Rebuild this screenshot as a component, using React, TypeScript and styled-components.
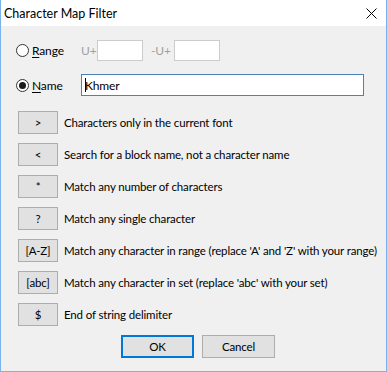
import React from "react";
import styled, { createGlobalStyle } from "styled-components";

const GlobalStyle = createGlobalStyle`
  html, body {
    margin: 0;
    padding: 0;
    background: #ffffff;
  }
  body {
    font-family: Lato, "Segoe UI", sans-serif;
    font-size: 11.5px;
    letter-spacing: -0.15px;
    color: #000;
    white-space: nowrap;
  }
`;

const Window = styled.div`
  width: 387px;
  height: 372px;
  box-sizing: border-box;
  border: 1px solid #7ab3ec;
  border-top: none;
  background: #f0f0f0;
  display: flex;
  flex-direction: column;
`;

const TitleBar = styled.div`
  height: 26px;
  background: #fff;
  display: flex;
  align-items: center;
  justify-content: space-between;
  padding: 0 9px 0 3px;
  font-size: 12.5px;
  letter-spacing: 0;
`;

const Close = styled.svg`
  width: 11px;
  height: 11px;
`;

const Content = styled.div`
  padding: 14px 0 0 15px;
  display: flex;
  flex-direction: column;
`;

const Row = styled.div<{ $top?: number; $height: number }>`
  display: flex;
  align-items: center;
  height: ${(p) => p.$height}px;
  margin-top: ${(p) => p.$top ?? 0}px;
`;

const RadioLabel = styled.label`
  display: flex;
  align-items: center;
  width: 65px;
  gap: 3px;
  font-size: 12px;
`;

const Radio = styled.span<{ $checked?: boolean }>`
  width: 13px;
  height: 13px;
  box-sizing: border-box;
  border-radius: 50%;
  border: 1px solid #333;
  background: #fff;
  display: flex;
  align-items: center;
  justify-content: center;
  &::after {
    content: "";
    display: ${(p) => (p.$checked ? "block" : "none")};
    width: 7px;
    height: 7px;
    border-radius: 50%;
    background: #1a1a1a;
  }
`;

const Key = styled.span`
  text-decoration: underline;
  text-underline-offset: 2px;
`;

const Muted = styled.span<{ $left?: number; $width: number }>`
  color: #a0a0a0;
  font-size: 12px;
  margin-left: ${(p) => p.$left ?? 0}px;
  width: ${(p) => p.$width}px;
`;

const Field = styled.div<{ $width: number; $focus?: boolean }>`
  width: ${(p) => p.$width}px;
  flex-shrink: 0;
  height: 100%;
  box-sizing: border-box;
  background: #fff;
  border: 1px solid ${(p) => (p.$focus ? "#4d82b8" : "#cccccc")};
  display: flex;
  align-items: center;
  padding-left: 3px;
  font-size: 12px;
`;

const Caret = styled.span`
  display: inline-block;
  width: 1px;
  height: 14px;
  background: #000;
  margin-right: -1px;
`;

const Rules = styled.div`
  display: flex;
  flex-direction: column;
  gap: 9px;
  margin-top: 15px;
  padding-left: 2px;
`;

const Rule = styled.div`
  display: flex;
  align-items: center;
  gap: 6px;
  height: 23px;
`;

const Button = styled.div<{ $width: number; $default?: boolean }>`
  width: ${(p) => p.$width}px;
  flex-shrink: 0;
  height: 23px;
  box-sizing: border-box;
  background: #e1e1e1;
  border: ${(p) => (p.$default ? "2px solid #0078d7" : "1px solid #adadad")};
  display: flex;
  align-items: center;
  justify-content: center;
`;

const Footer = styled.div`
  display: flex;
  gap: 8px;
  margin-top: 9px;
  padding-left: 105px;
`;

const rules = [
  [">", "Characters only in the current font"],
  ["<", "Search for a block name, not a character name"],
  ["*", "Match any number of characters"],
  ["?", "Match any single character"],
  ["[A-Z]", "Match any character in range (replace 'A' and 'Z' with your range)"],
  ["[abc]", "Match any character in set (replace 'abc' with your set)"],
  ["$", "End of string delimiter"],
];

export default function App() {
  return (
    <>
      <GlobalStyle />
      <Window>
        <TitleBar>
          <span>Character Map Filter</span>
          <Close viewBox="0 0 11 11">
            <path d="M0.5 0.5L10.5 10.5M10.5 0.5L0.5 10.5" stroke="#000" strokeWidth={1} fill="none" />
          </Close>
        </TitleBar>
        <Content>
          <Row $height={21}>
            <RadioLabel>
              <Radio />
              <span>
                <Key>R</Key>ange
              </span>
            </RadioLabel>
            <Muted $width={16}>U+</Muted>
            <Field $width={46} />
            <Muted $left={8} $width={23}>
              -U+
            </Muted>
            <Field $width={46} />
          </Row>
          <Row $height={22} $top={13}>
            <RadioLabel>
              <Radio $checked />
              <span>
                <Key>N</Key>ame
              </span>
            </RadioLabel>
            <Field $width={283} $focus>
              <Caret />
              Khmer
            </Field>
          </Row>
          <Rules>
            {rules.map(([sym, text]) => (
              <Rule key={sym}>
                <Button $width={40}>{sym}</Button>
                <span>{text}</span>
              </Rule>
            ))}
          </Rules>
          <Footer>
            <Button $width={73} $default>
              OK
            </Button>
            <Button $width={73}>Cancel</Button>
          </Footer>
        </Content>
      </Window>
    </>
  );
}
